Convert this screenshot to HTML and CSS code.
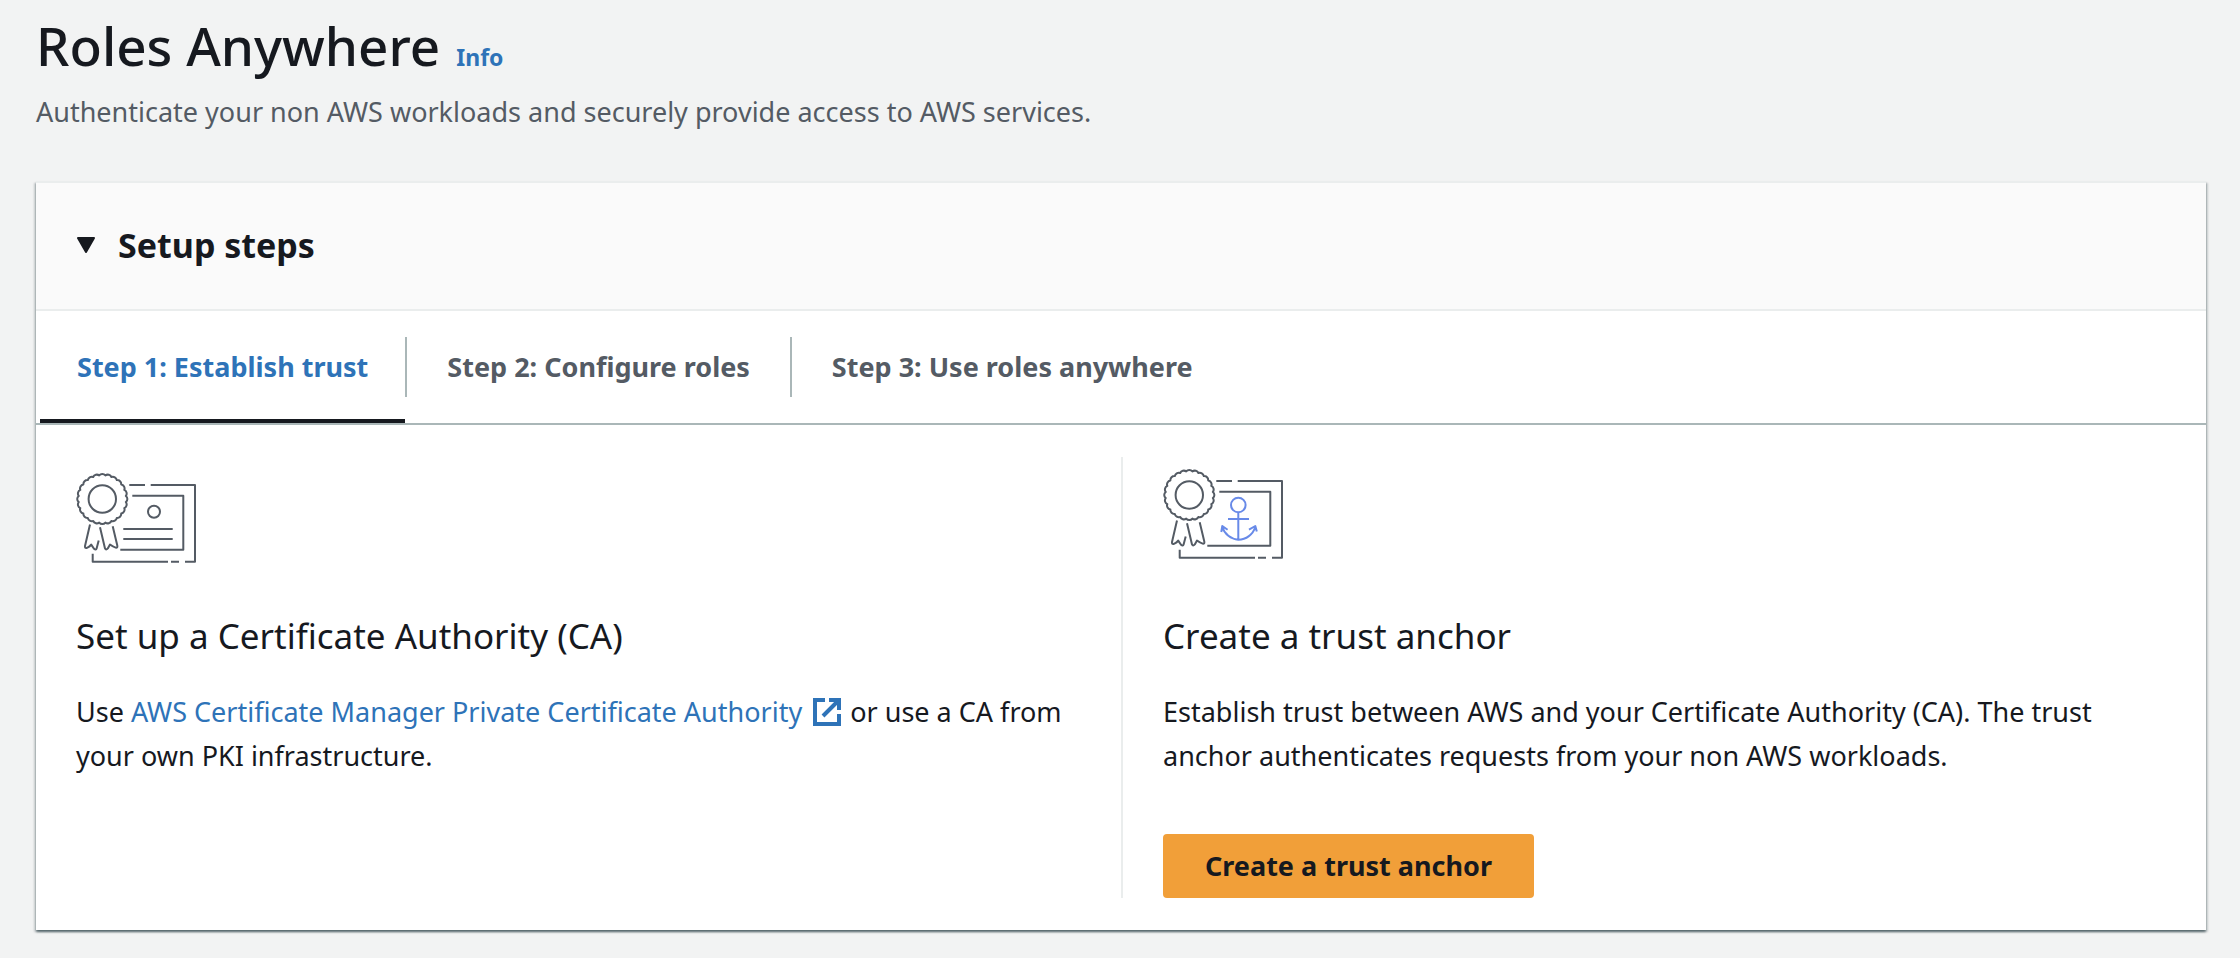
FILE: index.html
```html
<!DOCTYPE html>
<html lang="en">
<head>
<meta charset="utf-8">
<title>Roles Anywhere</title>
<link rel="stylesheet" href="styles.css">
</head>
<body>
<svg class="sprite" aria-hidden="true">
  <symbol id="certificate" viewBox="0 0 120 94">
    <path d="M49.9 31.1A4 4 0 0 1 48.3 37.1A4 4 0 0 1 45.2 42.5A4 4 0 0 1 40.8 46.9A4 4 0 0 1 35.4 50A4 4 0 0 1 29.4 51.6A4 4 0 0 1 23.2 51.6A4 4 0 0 1 17.2 50A4 4 0 0 1 11.8 46.9A4 4 0 0 1 7.4 42.5A4 4 0 0 1 4.3 37.1A4 4 0 0 1 2.7 31.1A4 4 0 0 1 2.7 24.9A4 4 0 0 1 4.3 18.9A4 4 0 0 1 7.4 13.5A4 4 0 0 1 11.8 9.1A4 4 0 0 1 17.2 6A4 4 0 0 1 23.2 4.4A4 4 0 0 1 29.4 4.4A4 4 0 0 1 35.4 6A4 4 0 0 1 40.8 9.1A4 4 0 0 1 45.2 13.5A4 4 0 0 1 48.3 18.9A4 4 0 0 1 49.9 24.9A4 4 0 0 1 49.9 31.1Z"/>
    <circle cx="26.3" cy="28" r="13.7"/>
    <path d="M14 53.4L9 75Q8.600 77.600 11 76.800Q14 75.500 15.200 73.600L18 77.800Q20 79.600 20.600 77.400L22.700 69.500M24 56.200L29 77.400Q30 79.600 31.800 77.400L34 73.500Q37 75.800 39.600 76.600Q41.800 77 41.300 74.600L36.700 55.200"/>
    <path d="M53.300 14H69M74.700 14H119V90.700H109M103 90.700H95M92 90.700H16.700V82.700M56.300 24.700H107.300V78.700H44.300"/>
  </symbol>
</svg>

<header class="page-header">
  <div class="title-row">
    <h1 class="page-title">Roles Anywhere</h1>
    <a class="info-link" href="#info">Info</a>
  </div>
  <p class="page-description">Authenticate your non AWS workloads and securely provide access to AWS services.</p>
</header>

<main class="panel">
  <h2 class="panel-heading">
    <button class="panel-toggle" type="button" aria-expanded="true" aria-controls="setup-steps">
      <svg class="caret" viewBox="0 0 20 16" aria-hidden="true"><path d="M2 1H18L10 15Z"/></svg>
      Setup steps
    </button>
  </h2>

  <div id="setup-steps">
    <div class="tabs" role="tablist" aria-label="Setup steps">
      <button class="tab tab-active" type="button" role="tab" aria-selected="true" id="tab-1" aria-controls="step-1">Step 1: Establish trust</button>
      <button class="tab" type="button" role="tab" aria-selected="false">Step 2: Configure roles</button>
      <button class="tab" type="button" role="tab" aria-selected="false">Step 3: Use roles anywhere</button>
    </div>

    <div class="columns" role="tabpanel" id="step-1" aria-labelledby="tab-1">
      <section class="column">
        <div class="art art-low">
          <svg class="illustration" viewBox="0 0 120 94" aria-hidden="true">
            <use href="#certificate"/>
            <circle cx="78" cy="40.700" r="6"/>
            <path d="M47.300 58H96.700M47.300 68H96.700"/>
          </svg>
        </div>
        <h3 class="column-title">Set up a Certificate Authority (CA)</h3>
        <p class="column-text">Use <a class="link" href="#private-ca">AWS Certificate Manager Private Certificate Authority <svg class="external" viewBox="0 0 28 28" role="img" aria-label="Opens in a new tab"><path d="M12 2H2V26H26V16M16 2H26V12M26 2L10 18"/></svg></a> or use a CA from your own PKI infrastructure.</p>
      </section>
      <section class="column">
        <div class="art">
          <svg class="illustration" viewBox="0 0 120 94" aria-hidden="true">
            <use href="#certificate"/>
            <g class="anchor">
              <circle cx="75.300" cy="38" r="7.300"/>
              <path d="M75.300 45.300V72.700M65 52H86M59.300 60A18 18 0 0 0 75.300 72.700A18 18 0 0 0 92.300 60M58.300 65L59.300 59L64.600 62.700M86 62.700L92.300 59L93.800 64.600"/>
            </g>
          </svg>
        </div>
        <h3 class="column-title">Create a trust anchor</h3>
        <p class="column-text">Establish trust between AWS and your Certificate Authority (CA). The trust anchor authenticates requests from your non AWS workloads.</p>
        <button class="primary-button" type="button">Create a trust anchor</button>
      </section>
    </div>
  </div>
</main>
</body>
</html>
```
FILE: styles.css
```css
* { box-sizing: border-box; }

body {
  margin: 0;
  padding: 16px 34px 28px 36px;
  background: #f2f3f3;
  color: #16191f;
  font-family: "Noto Sans", sans-serif;
  font-size: 27px;
  line-height: 44px;
}

h1, h2, h3, p { margin: 0; }

button {
  border: 0;
  background: none;
  color: inherit;
  font: inherit;
  cursor: pointer;
}

a { color: #2e73b8; text-decoration: none; }

.sprite { position: absolute; width: 0; height: 0; }

.title-row {
  display: flex;
  align-items: baseline;
  gap: 16px;
}

.page-title {
  font-size: 53px;
  font-weight: 500;
  line-height: 60px;
}

.info-link {
  font-size: 23px;
  font-weight: 700;
  line-height: 32px;
}

.page-description {
  margin-top: 18px;
  color: #545b64;
  line-height: 36px;
}

.panel {
  margin-top: 51px;
  border-top: 2px solid #eaeded;
  background: #fff;
  box-shadow: 0 2px 2px 0 rgba(0, 28, 36, 0.5), 2px 2px 2px 0 rgba(0, 28, 36, 0.15), -2px 2px 2px 0 rgba(0, 28, 36, 0.15);
}

.panel-heading {
  border-bottom: 2px solid #eaeded;
  background: #fafafa;
  font-size: 34px;
  font-weight: 700;
}

.panel-toggle {
  display: flex;
  align-items: center;
  gap: 22px;
  width: 100%;
  padding: 40px 40px 42px;
  text-align: left;
}

.caret {
  width: 20px;
  height: 16px;
  fill: #16191f;
  stroke: #16191f;
  stroke-width: 2;
  stroke-linejoin: round;
}

.tabs {
  display: flex;
  padding-left: 4px;
  border-bottom: 2px solid #aab7b8;
}

.tab {
  position: relative;
  padding: 34px 40px 34px 42px;
  color: #545b64;
  font-weight: 700;
}

.tab-active {
  padding: 34px 37px 30px;
  border-bottom: 4px solid #16191f;
  color: #2e73b8;
}

.tab + .tab::before {
  content: "";
  position: absolute;
  top: 26px;
  bottom: 26px;
  left: 0;
  width: 2px;
  background: #aab7b8;
}

.columns {
  display: grid;
  grid-template-columns: 1fr 1fr;
  padding: 32px 0;
}

.column { padding: 10px 40px 0; }

.column + .column { border-left: 2px solid #eaeded; }

.art {
  display: flex;
  height: 98px;
  margin-bottom: 49px;
}

.art-low { align-items: flex-end; }

.illustration {
  width: 120px;
  height: 94px;
  fill: none;
  stroke: #545b64;
  stroke-width: 2;
  stroke-linejoin: round;
}

.anchor { stroke: #688ae8; }

.column-title {
  font-size: 35px;
  font-weight: 400;
}

.column-text { margin-top: 32px; }

.external {
  width: 28px;
  height: 28px;
  margin: 0 2px 0 4px;
  vertical-align: -4px;
  fill: none;
  stroke: currentColor;
  stroke-width: 4;
}

.primary-button {
  margin-top: 56px;
  padding: 10px 42px;
  border-radius: 4px;
  background: #f19f39;
  font-weight: 700;
}
```
